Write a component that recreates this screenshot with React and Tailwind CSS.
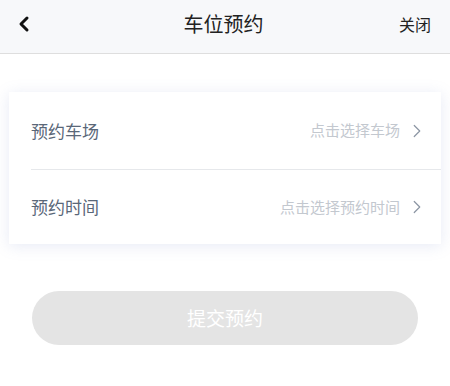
import { ChevronLeft, ChevronRight } from 'lucide-react';

const font = { fontFamily: '"Noto Sans CJK SC", "Noto Sans", sans-serif' };

function Row({ label, placeholder, height }) {
  return (
    <div className={`flex items-center ${height}`}>
      <span className="text-[17px] text-[#5a6778]">{label}</span>
      <div className="ml-auto flex items-center pr-[13px]">
        <span className="text-[15px] text-[#c3c8cf]">{placeholder}</span>
        <ChevronRight size={22} strokeWidth={1.3} className="ml-[6px] text-[#8b95a3]" />
      </div>
    </div>
  );
}

export default function App() {
  return (
    <div className="w-[450px] h-[386px] bg-white" style={font}>
      <header className="h-[54px] bg-[#f7f8fa] border-b border-[#dedede] flex items-center px-[12px] pb-[6px]">
        <ChevronLeft size={24} strokeWidth={3} className="text-[#111]" />
        <h1 className="flex-1 text-center text-[20px] text-[#222] pl-[12px]">车位预约</h1>
        <span className="text-[16px] text-[#222] pr-[7px]">关闭</span>
      </header>
      <div className="pt-[38px] px-[9px]">
        <div className="bg-white pl-[22px] shadow-[0_2px_14px_rgba(120,140,200,0.18)]">
          <div className="border-b border-[#e6e8eb]">
            <Row label="预约车场" placeholder="点击选择车场" height="h-[77px]" />
          </div>
          <Row label="预约时间" placeholder="点击选择预约时间" height="h-[74px]" />
        </div>
      </div>
      <div className="px-[32px] pt-[47px]">
        <button className="w-full h-[54px] rounded-full bg-[#e4e4e4] text-white text-[19px]">提交预约</button>
      </div>
    </div>
  );
}
